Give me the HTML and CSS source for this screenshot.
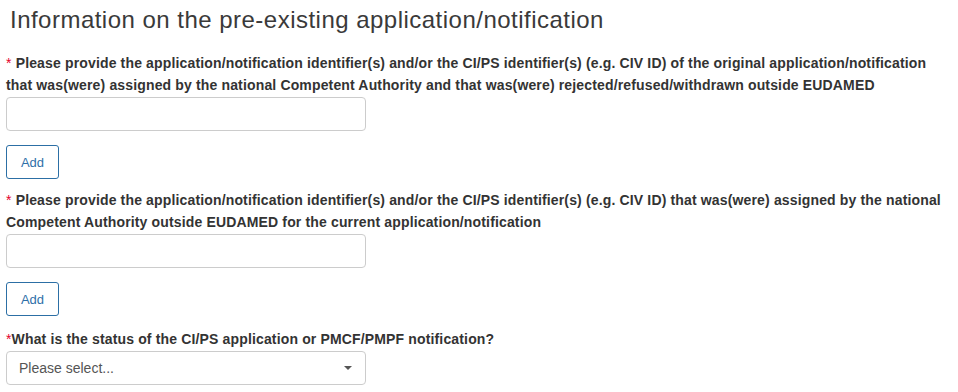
FILE: index.html
```html
<!DOCTYPE html>
<html>
<head>
<meta charset="utf-8">
<link rel="stylesheet" href="styles.css">
</head>
<body>
<div class="page">
  <h2 class="title">Information on the pre-existing application/notification</h2>

  <div class="field">
    <label class="label"><span class="req">*</span> Please provide the application/notification identifier(s) and/or the CI/PS identifier(s) (e.g. CIV ID) of the original application/notification that was(were) assigned by the national Competent Authority and that was(were) rejected/refused/withdrawn outside EUDAMED</label>
    <input class="input" type="text">
    <button class="btn" type="button">Add</button>
  </div>

  <div class="field">
    <label class="label"><span class="req">*</span> Please provide the application/notification identifier(s) and/or the CI/PS identifier(s) (e.g. CIV ID) that was(were) assigned by the national Competent Authority outside EUDAMED for the current application/notification</label>
    <input class="input" type="text">
    <button class="btn" type="button">Add</button>
  </div>

  <div class="field field-last">
    <label class="label"><span class="req">*</span>What is the status of the CI/PS application or PMCF/PMPF notification?</label>
    <div class="select">
      <span class="placeholder">Please select...</span>
      <span class="caret"></span>
    </div>
  </div>
</div>
</body>
</html>
```

FILE: styles.css
```css
html, body {
  margin: 0;
  padding: 0;
  background: #fff;
}
.page {
  padding: 0 6px;
  font-family: "Liberation Sans", Arial, sans-serif;
  color: #333;
}
.title {
  margin: 0;
  padding-top: 5px;
  padding-left: 4px;
  font-size: 24px;
  font-weight: normal;
  line-height: 30px;
  letter-spacing: 0.48px;
  color: #3a3a3a;
}
.field {
  display: flex;
  flex-direction: column;
  align-items: flex-start;
}
.field + .field {
  margin-top: 10px;
}
.field-last {
  margin-top: 12px !important;
}
.title + .field {
  margin-top: 17px;
}
.label {
  display: block;
  font-size: 14px;
  font-weight: bold;
  line-height: 22px;
  letter-spacing: 0.15px;
  color: #333;
  margin-bottom: 1px;
}
.req {
  color: #e4002b;
  font-weight: normal;
}
.input {
  box-sizing: border-box;
  width: 360px;
  height: 34px;
  margin: 0;
  border: 1px solid #ccc;
  border-radius: 4px;
  font-family: inherit;
  font-size: 14px;
  padding: 6px 12px;
}
.btn {
  box-sizing: border-box;
  margin-top: 14px;
  width: 53px;
  height: 34px;
  border: 1px solid #2c6fa5;
  border-radius: 3px;
  background: #fff;
  color: #2f6fa8;
  font-family: inherit;
  font-size: 13px;
  padding: 0;
}
.select {
  box-sizing: border-box;
  width: 360px;
  height: 34px;
  border: 1px solid #ccc;
  border-radius: 4px;
  display: flex;
  align-items: center;
  justify-content: space-between;
  padding: 0 13px 0 12px;
}
.placeholder {
  font-size: 14px;
  color: #555;
}
.caret {
  width: 0;
  height: 0;
  border-left: 4px solid transparent;
  border-right: 4px solid transparent;
  border-top: 4px solid #555;
}
```
